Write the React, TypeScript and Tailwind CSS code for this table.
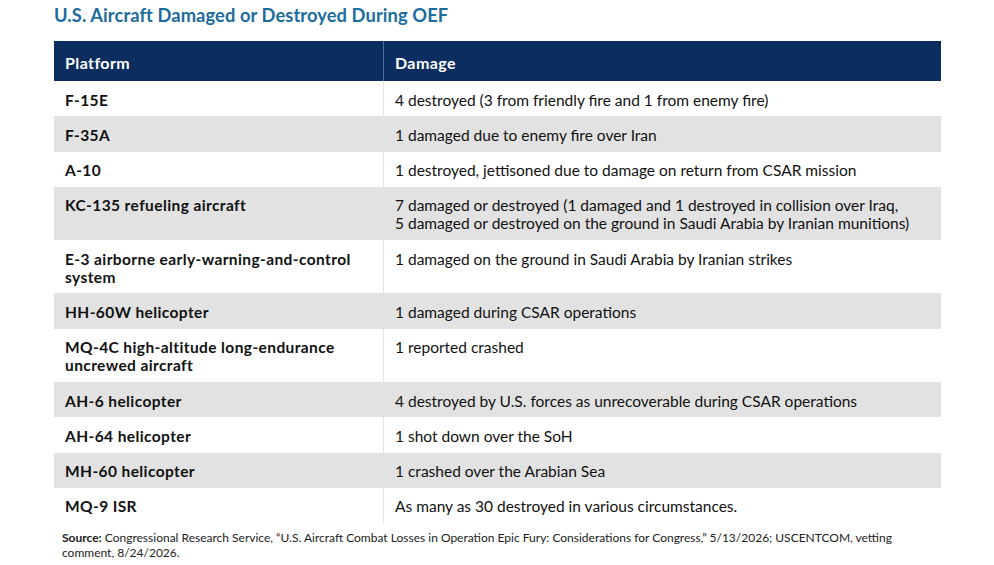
import { Fragment } from "react";

const rows: { platform: string; damage: string[] }[] = [
  { platform: "F-15E", damage: ["4 destroyed (3 from friendly fire and 1 from enemy fire)"] },
  { platform: "F-35A", damage: ["1 damaged due to enemy fire over Iran"] },
  { platform: "A-10", damage: ["1 destroyed, jettisoned due to damage on return from CSAR mission"] },
  {
    platform: "KC-135 refueling aircraft",
    damage: [
      "7 damaged or destroyed (1 damaged and 1 destroyed in collision over Iraq,",
      "5 damaged or destroyed on the ground in Saudi Arabia by Iranian munitions)",
    ],
  },
  {
    platform: "E-3 airborne early-warning-and-control system",
    damage: ["1 damaged on the ground in Saudi Arabia by Iranian strikes"],
  },
  { platform: "HH-60W helicopter", damage: ["1 damaged during CSAR operations"] },
  { platform: "MQ-4C high-altitude long-endurance uncrewed aircraft", damage: ["1 reported crashed"] },
  { platform: "AH-6 helicopter", damage: ["4 destroyed by U.S. forces as unrecoverable during CSAR operations"] },
  { platform: "AH-64 helicopter", damage: ["1 shot down over the SoH"] },
  { platform: "MH-60 helicopter", damage: ["1 crashed over the Arabian Sea"] },
  { platform: "MQ-9 ISR", damage: ["As many as 30 destroyed in various circumstances."] },
];

export default function App() {
  return (
    <div className="w-[994px] h-[565px] bg-white pl-[54px] font-['Lato',sans-serif] text-[#111]">
      {/* Title */}
      <h1 className="pt-[3px] h-[41px] text-[18.3px] leading-[24px] font-bold tracking-[0.1px] text-[#1c6c9c]">
        U.S. Aircraft Damaged or Destroyed During OEF
      </h1>

      {/* Table */}
      <div className="w-[887px]">
        <div className="grid grid-cols-[330px_1fr] h-[40px] bg-[#0b2d5f] text-white text-[16px] font-bold tracking-[0.4px]">
          <div className="flex items-center pl-[11px] pt-[3px] border-r border-[#4d6f9c]">Platform</div>
          <div className="flex items-center pl-[11px] pt-[3px]">Damage</div>
        </div>
        {rows.map((row, i) => (
          <div
            key={row.platform}
            className={`grid grid-cols-[330px_1fr] leading-[18px] ${
              i % 2 === 1 ? "bg-[#e2e2e2]" : "bg-white"
            }`}
          >
            <div className="pl-[11px] pr-[20px] pt-[9.5px] pb-[7.8px] text-[15.5px] tracking-[0.4px] font-bold border-r border-[#e4e4e4]">
              {row.platform}
            </div>
            <div className="pl-[11px] pr-[10px] pt-[9.5px] pb-[7.8px] text-[15.5px] whitespace-nowrap">
              {row.damage.map((line, j) => (
                <Fragment key={j}>
                  {j > 0 && <br />}
                  {line}
                </Fragment>
              ))}
            </div>
          </div>
        ))}
      </div>

      {/* Source note */}
      <p className="pl-[8px] pt-[7px] pr-[90px] text-[12px] leading-[15px] text-[#222]">
        <span className="font-bold">Source:</span> Congressional Research Service, “U.S. Aircraft Combat Losses in
        Operation Epic Fury: Considerations for Congress,” 5/13/2026; USCENTCOM, vetting comment, 8/24/2026.
      </p>
    </div>
  );
}
